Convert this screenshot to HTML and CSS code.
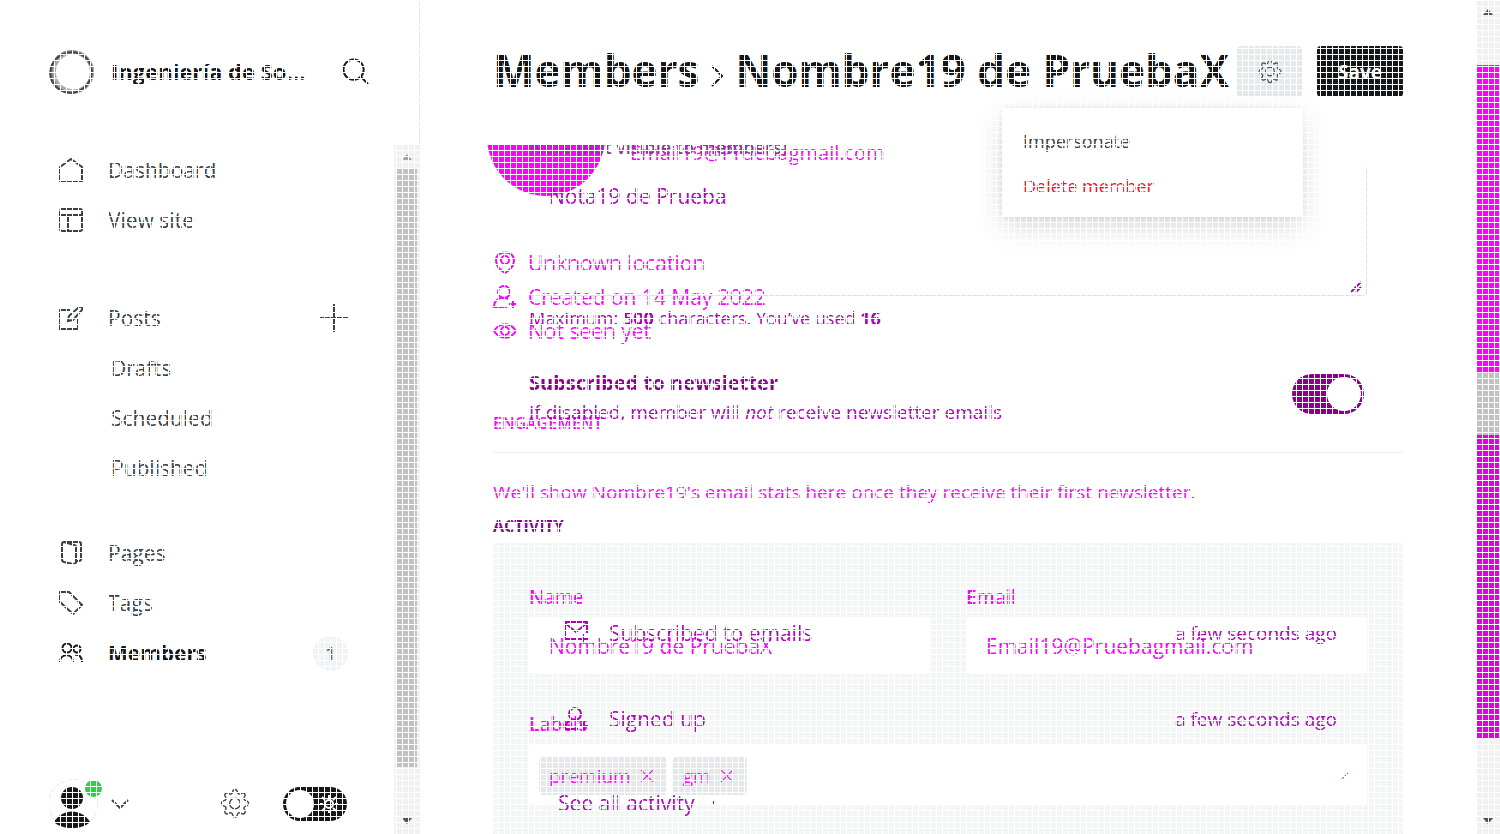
FILE: index.html
```html
<!DOCTYPE html>
<html lang="en">
<head>
<meta charset="utf-8">
<title>Members</title>
<link rel="stylesheet" href="styles.css">
</head>
<body>
<svg class="defs" width="0" height="0" aria-hidden="true">
  <symbol id="gear" viewBox="0 0 24 24"><path d="M10.2 3.1c.5-2.6 3.1-2.6 3.6 0 .3 1.4 1.5 1.9 2.7 1.1 2.2-1.5 4 .3 2.600 2.500-.8 1.200-.3 2.400 1.100 2.700 2.600.5 2.600 3.700 0 4.200-1.400.3-1.900 1.500-1.100 2.700 1.500 2.200-.4 4.100-2.600 2.600-1.200-.8-2.400-.3-2.700 1.100-.5 2.600-3.100 2.600-3.600 0-.3-1.400-1.500-1.900-2.700-1.100-2.200 1.500-4.100-.4-2.600-2.600.8-1.200.3-2.400-1.100-2.700-2.600-.5-2.600-3.700 0-4.200 1.400-.3 1.900-1.500 1.100-2.700-1.500-2.200.4-4 2.600-2.500 1.200.8 2.400.3 2.700-1.100z"/><circle cx="12" cy="11.600" r="4"/></symbol>
  <symbol id="person-plus" viewBox="0 0 24 24"><circle cx="11" cy="7" r="6"/><path d="M15 14c-6-3-14 0-14 8h13M20 15v8M16 19h8"/></symbol>
</svg>
<div class="app">
  <aside class="sidebar">
    <header class="brand">
      <svg class="brand-logo" viewBox="0 0 46 46" aria-hidden="true"><ellipse cx="23" cy="23" rx="20" ry="20" stroke="#888" stroke-width="4"/><ellipse cx="24" cy="22" rx="19" ry="19" stroke="#aaa" stroke-width="3" transform="rotate(40 23 23)"/><ellipse cx="22" cy="23" rx="21" ry="20" stroke="#444" stroke-width="2" transform="rotate(-25 23 23)"/></svg>
      <strong class="brand-name">Ingeniería de So...</strong>
      <button class="plain search" aria-label="Search"><svg viewBox="0 0 28 28"><circle cx="12" cy="12" r="10.500"/><path d="M19.500 19.500L27 27"/></svg></button>
    </header>
    <div class="side-body">
      <div class="side-main">
        <nav class="nav">
          <a class="nav-item" href="#"><svg viewBox="0 0 24 24"><path d="M1 9v14h22V9L12 1z"/></svg>Dashboard</a>
          <a class="nav-item" href="#"><svg viewBox="0 0 24 24"><rect x="1" y="1" width="22" height="22" rx="2"/><path d="M1 7h22M9 7v16"/></svg>View site</a>
          <div class="nav-group">
            <a class="nav-item" href="#"><svg viewBox="0 0 24 24"><path d="M11 4H1v19h18V12M9 15l1-5L20 1c2-1 4 1 3 3l-9 10z"/></svg>Posts</a>
            <button class="plain add" aria-label="New post"><svg viewBox="0 0 28 28"><path d="M14 0v28M0 14h28"/></svg></button>
          </div>
          <a class="nav-item sub" href="#">Drafts</a>
          <a class="nav-item sub" href="#">Scheduled</a>
          <a class="nav-item sub" href="#">Published</a>
          <a class="nav-item pages" href="#"><svg viewBox="0 0 24 24"><path d="M16 20h4c1 0 2-1 2-2V3c0-1-1-2-2-2H5C4 1 3 2 3 3v15c0 2 0 2 2 3l9 2c2 0 3-1 3-2V6c0-1-1-2-2-2L5 1"/></svg>Pages</a>
          <a class="nav-item" href="#"><svg viewBox="0 0 24 24"><path d="M1 1h9l13 13-9 9L1 11z"/></svg>Tags</a>
          <a class="nav-item active" href="#"><svg viewBox="0 0 24 24"><circle cx="8" cy="7" r="4.500"/><circle cx="18" cy="8" r="3.500"/><path d="M1 21c0-9 13-9 13 0M16 14c4-1 7 2 7 7"/></svg>Members<span class="count">1</span></a>
        </nav>
        <footer class="side-foot">
          <button class="plain user" aria-label="Account">
            <svg class="avatar" viewBox="0 0 50 50"><circle class="ring" cx="25" cy="25" r="24.500"/><circle cx="24" cy="19" r="11"/><path d="M6 43C14 29 34 29 42 43C34 51 14 51 6 43z"/></svg>
            <span class="dot"></span>
            <svg class="chevron" viewBox="0 0 18 10"><path d="M1 1l8 8 8-8"/></svg>
          </button>
          <button class="plain settings" aria-label="Settings"><svg><use href="#gear"/></svg></button>
          <button class="theme" role="switch" aria-checked="false" aria-label="Night mode"><span class="theme-knob"></span><svg viewBox="0 0 20 20"><circle cx="10" cy="10" r="4"/><path d="M10 1v3M10 16v3M1 10h3M16 10h3M3 3l3 3M14 14l3 3M3 17l3-3M14 6l3-3"/></svg></button>
        </footer>
      </div>
      <div class="scrollbar"><i class="up faint"></i><div class="thumb"></div><i class="down"></i></div>
    </div>
  </aside>

  <main class="main">
    <header class="top">
      <h1 class="title"><a href="#">Members</a><svg viewBox="0 0 12 22"><path d="M1 1l10 10L1 21"/></svg><span>Nombre19 de PruebaX</span></h1>
      <div class="actions">
        <button class="btn btn-gear" aria-label="Member actions"><svg><use href="#gear"/></svg></button>
        <button class="btn btn-save">Save</button>
        <div class="menu">
          <button class="menu-item">Impersonate</button>
          <button class="menu-item danger">Delete member</button>
        </div>
      </div>
    </header>

    <div class="content">
      <section class="layer before">
        <div class="profile"><span class="profile-pic"></span><span class="profile-mail">Email19@Pruebagmail.com</span></div>
        <div class="facts">
          <span class="fact"><svg viewBox="0 0 24 24"><path d="M12 22C7 19 3 14 3 9c0-10 18-10 18 0 0 5-4 10-9 13z"/><circle cx="12" cy="9" r="4"/></svg>Unknown location</span>
          <span class="fact"><svg><use href="#person-plus"/></svg>Created on 14 May 2022</span>
          <span class="fact"><svg viewBox="0 0 24 24"><path d="M1 12c6-9 16-9 22 0-6 9-16 9-22 0z"/><circle cx="12" cy="12" r="4"/></svg>Not seen yet</span>
        </div>
        <h2 class="caption">ENGAGEMENT</h2>
        <p class="stats">We'll show Nombre19's email stats here once they receive their first newsletter.</p>
        <form class="card">
          <div class="fields">
            <div class="field"><label for="name">Name</label><input id="name" value="Nombre19 de PruebaX"></div>
            <div class="field"><label for="email">Email</label><input id="email" value="Email19@Pruebagmail.com"></div>
          </div>
          <div class="field">
            <span class="label">Labels</span>
            <div class="tokens">
              <span class="token">premium <button class="plain" type="button" aria-label="Remove premium"><svg viewBox="0 0 12 12"><path d="M1 1l10 10M11 1L1 11"/></svg></button></span>
              <span class="token">gm <button class="plain" type="button" aria-label="Remove gm"><svg viewBox="0 0 12 12"><path d="M1 1l10 10M11 1L1 11"/></svg></button></span>
              <svg class="slash" viewBox="0 0 8 8"><path d="M1 7l6-6"/></svg>
            </div>
          </div>
        </form>
      </section>

      <section class="layer after">
        <div class="note">
          <label class="note-label" for="note">Note (not visible to members)</label>
          <div class="note-box"><textarea id="note">Nota19 de Prueba</textarea><svg class="grip" viewBox="0 0 12 12"><path d="M1 11L11 1M6 11l5-5"/></svg></div>
          <p class="hint">Maximum: <b>500</b> characters. You’ve used <b>16</b></p>
          <div class="subscribe">
            <div><h3>Subscribed to newsletter</h3><p>If disabled, member will <em>not</em> receive newsletter emails</p></div>
            <button class="switch" role="switch" aria-checked="true" aria-label="Subscribed to newsletter"><span></span></button>
          </div>
        </div>
        <h2 class="caption activity">ACTIVITY</h2>
        <div class="events">
          <div class="event"><svg viewBox="0 0 24 24"><path d="M12 18H1V1h22v11M1 2l11 9L23 2M19 13v10M14 18h10"/></svg>Subscribed to emails<time>a few seconds ago</time></div>
          <div class="event"><svg><use href="#person-plus"/></svg>Signed up<time>a few seconds ago</time></div>
        </div>
        <a class="see-all" href="#">See all activity<span class="tick"></span></a>
      </section>
    </div>
  </main>

  <div class="scrollbar page"><i class="up"></i><div class="thumb"></div><i class="down"></i></div>
</div>
</body>
</html>
```
FILE: styles.css
```css
* { box-sizing: border-box; }
body {
  margin: 0;
  background: #fff;
  color: #394047;
  font: 21px/24px "Open Sans", "Noto Sans", sans-serif;
}
body::after {
  content: "";
  position: fixed;
  inset: 0;
  z-index: 10;
  pointer-events: none;
  background:
    repeating-linear-gradient(90deg, #fff 0 1px, transparent 1px 6px),
    repeating-linear-gradient(#fff 0 1px, transparent 1px 6px);
}
h1, h2, h3, p { margin: 0; }
a { color: inherit; text-decoration: none; }
svg { display: block; fill: none; stroke: currentColor; stroke-width: 2; flex: none; }
button, input, textarea { font: inherit; color: inherit; }
.defs { position: absolute; }
.plain { border: 0; padding: 0; background: none; }

.app { display: flex; height: 100vh; overflow: hidden; }

/* Sidebar */
.sidebar { width: 420px; flex: none; display: flex; flex-direction: column; border-right: 1px solid #e5e9ed; }
.brand { display: flex; align-items: center; height: 145px; padding: 0 50px 2px 49px; flex: none; }
.brand-logo { width: 46px; height: 46px; }
.brand-name { margin-left: 16px; padding-bottom: 2px; font-size: 22px; color: #15171a; flex: 1; white-space: nowrap; }
.search svg { width: 27px; height: 27px; color: #15171a; }
.side-body { display: flex; flex: 1; min-height: 0; margin-right: -1px; }
.side-main { display: flex; flex-direction: column; flex: 1; }
.nav { flex: 1; display: flex; flex-direction: column; padding: 0 46px 0 59px; }
.nav-item { display: flex; align-items: center; height: 50px; gap: 25px; }
.nav-item svg { width: 24px; height: 24px; }
.nav-group { display: flex; align-items: center; justify-content: space-between; margin-top: 48px; }
.add svg { width: 28px; height: 28px; }
.sub { padding-left: 52px; }
.pages { margin-top: 35px; }
.active { font-weight: 700; color: #15171a; }
.count { margin-left: auto; width: 35px; height: 35px; border-radius: 50%; background: #f0f2f4; color: #5d666f; font-size: 18px; line-height: 35px; text-align: center; font-weight: 600; }
.side-foot { display: flex; align-items: center; height: 60px; padding: 0 47px 0 48px; }
.user { position: relative; display: flex; align-items: center; gap: 13px; margin-right: auto; }
.avatar { width: 50px; height: 50px; fill: #15171a; stroke: none; }
.avatar .ring { fill: none; stroke: #e5e7ea; stroke-width: 1; }
.dot { position: absolute; left: 37px; top: 1px; width: 17px; height: 17px; border-radius: 50%; background: #30cf43; }
.chevron { width: 18px; height: 10px; }
.settings svg { width: 32px; height: 32px; stroke-width: 1; }
.theme { display: flex; align-items: center; gap: 5px; width: 64px; height: 34px; margin-left: 32px; padding: 0 3px; border: 0; border-radius: 17px; background: #15171a; color: #fff; }
.theme-knob { width: 28px; height: 28px; border-radius: 50%; background: #fff; }
.theme svg { width: 20px; height: 20px; }

/* Scrollbars */
.scrollbar { display: flex; flex-direction: column; align-items: center; width: 26px; flex: none; padding: 9px 0 10px; background: #f1f1f1; }
.scrollbar .thumb { width: 20px; margin: 9px 0 auto; flex: 0 1 598px; background: #c1c1c1; }
.up, .down { border: 5px solid transparent; flex: none; }
.up { border-top: 0; border-bottom: 6px solid #505050; }
.up.faint { border-bottom-color: #a3a3a3; }
.down { border-bottom: 0; border-top: 6px solid #505050; }
.page { width: 24px; }
.page .thumb { width: 22px; margin-top: 50px; flex-basis: 673px; background: linear-gradient(#f0f 0 307px, #c1c1c1 307px 370px, #e000e0 370px); }

/* Header */
.main { flex: 1; min-width: 0; display: flex; flex-direction: column; }
.top { display: flex; align-items: center; justify-content: space-between; height: 145px; padding: 0 73px 2px; flex: none; }
.title { display: flex; align-items: center; gap: 12px; padding-bottom: 3px; font-size: 44px; line-height: 52px; font-weight: 700; color: #15171a; white-space: nowrap; width: 0; }
.title svg { width: 12px; height: 22px; margin-top: 12px; }
.actions { position: relative; display: flex; gap: 15px; }
.btn { height: 51px; border: 0; border-radius: 4px; font-size: 19px; font-weight: 700; display: grid; place-items: center; }
.btn-gear { width: 65px; background: #e6e9eb; }
.btn-gear svg { width: 26px; height: 26px; stroke-width: 1; }
.btn-save { width: 86px; background: #15171a; color: #fff; }
.menu { position: absolute; z-index: 5; right: 101px; top: 62px; width: 300px; padding: 10px 0 9px; background: #fff; border-radius: 4px; box-shadow: 0 0 4px rgba(0, 0, 0, .08), 0 10px 30px rgba(0, 0, 0, .16); }
.menu-item { display: block; width: 100%; height: 45px; padding: 0 21px; border: 0; background: none; text-align: left; font-size: 18px; }
.danger { color: #f50b23; }

/* Member page: two superimposed states */
.content { flex: 1; min-height: 0; display: grid; grid-template: auto / minmax(0, 1fr); align-items: start; padding: 0 73px 0 67px; overflow: hidden; }
.layer { grid-area: 1 / 1; padding-left: 6px; }
.before { color: #f0f; }
.after { color: #b000b8; z-index: 1; }
.profile { display: flex; height: 51px; gap: 25px; margin-left: -6px; }
.profile-pic { width: 118px; height: 118px; margin-top: -67px; border-radius: 50%; background: #f0f; }
.profile-mail { line-height: 16px; font-size: 20px; }
.facts { margin-top: 50px; }
.fact { display: flex; align-items: center; height: 34px; gap: 11px; }
.fact svg { width: 24px; height: 24px; }
.caption { font-size: 16px; line-height: 20px; font-weight: 600; margin-top: 65px; }
.stats { margin-top: 44px; line-height: 30px; font-size: 19px; }
.card { display: flex; flex-direction: column; gap: 38px; margin-top: 36px; padding: 42px 36px; border-radius: 4px; background: #f4f6f6; }
.fields { display: grid; grid-template-columns: 1fr 1fr; gap: 36px; }
.field { display: flex; flex-direction: column; gap: 8px; min-width: 0; }
.field label, .label { font-size: 19px; font-weight: 600; }
.field input { width: 100%; height: 57px; padding: 0 20px; border: 0; border-radius: 5px; background: #fff; }
.tokens { display: flex; align-items: center; height: 61px; gap: 6px; padding: 2px 18px 0 10px; border-radius: 5px; background: #fff; }
.token { display: flex; align-items: center; gap: 9px; height: 38px; padding: 0 13px 0 10px; border-radius: 4px; background: #e5e8eb; font-size: 19px; }
.token svg { width: 14px; height: 14px; stroke-width: 1; }
.slash { width: 8px; height: 8px; margin-left: auto; stroke-width: 1; }

.note { padding: 0 36px 28px; border-bottom: 1px solid #ebeef0; }
.note-label { display: block; margin-top: -10px; font-size: 18px; font-weight: 600; color: #8b3a8b; }
.note-box { position: relative; margin-top: 8px; }
textarea { display: block; width: 100%; height: 129px; padding: 17px 20px; border: 1px solid #dde1e5; border-top: 0; border-left: 0; border-radius: 4px; background: none; resize: none; overflow: hidden; }
.grip { position: absolute; right: 5px; bottom: 3px; width: 12px; height: 12px; }
.hint { margin-top: 10px; font-size: 18px; }
.subscribe { display: flex; align-items: center; justify-content: space-between; margin-top: 41px; }
.subscribe h3 { font-size: 20px; line-height: 24px; font-weight: 700; color: #900090; }
.subscribe p { margin-top: 5px; font-size: 19px; }
.switch { width: 72px; height: 40px; margin: 0 3px 8px 0; padding: 3px; border: 0; border-radius: 20px; background: #8b008b; }
.switch span { display: block; width: 34px; height: 34px; margin-left: auto; border-radius: 50%; background: #fff; }
.activity { margin-top: 63px; font-weight: 700; color: #900090; }
.events { margin-top: 54px; padding: 0 66px 0 71px; }
.event { display: flex; align-items: center; height: 86px; gap: 21px; }
.event svg { width: 24px; height: 24px; }
.event time { margin-left: auto; font-size: 19px; }
.see-all { display: flex; align-items: center; gap: 18px; height: 30px; margin-top: 26px; padding-left: 65px; }
.tick { width: 1px; height: 4px; background: #b000b8; }
```
